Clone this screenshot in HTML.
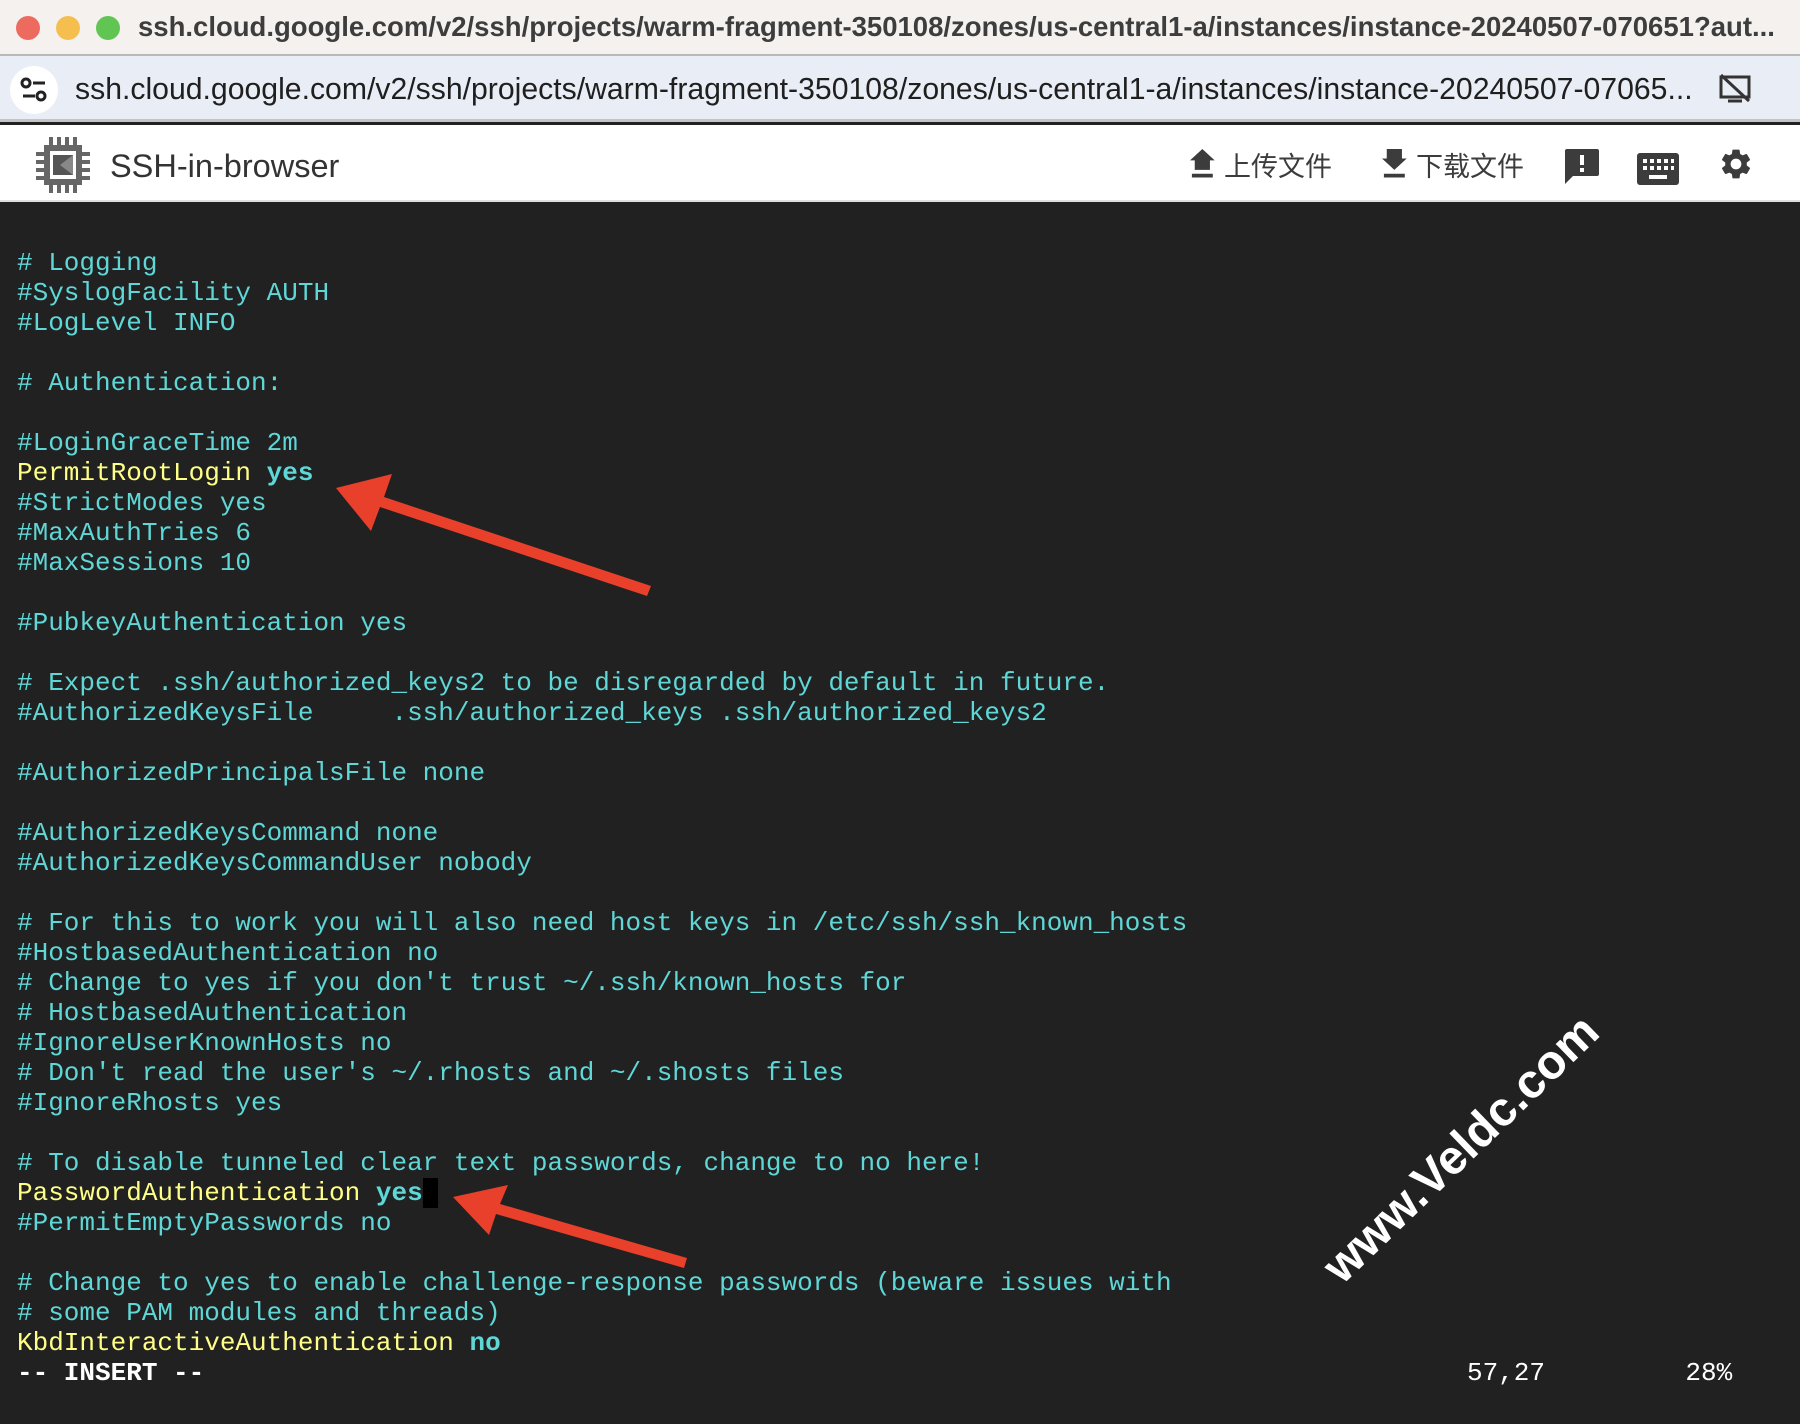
<!DOCTYPE html>
<html><head><meta charset="utf-8"><style>
*{margin:0;padding:0;box-sizing:border-box}
body{width:1800px;height:1424px;overflow:hidden;background:#212121;font-family:"Liberation Sans","Noto Sans CJK SC",sans-serif;position:relative}
#tb{position:absolute;left:0;top:0;width:1800px;height:56px;background:#f5f1ee;border-bottom:2px solid #b9b9b9}
.dot{position:absolute;top:16px;width:24px;height:24px;border-radius:50%}
#tt{position:absolute;left:138px;top:11px;font-size:27.5px;font-weight:bold;color:#3d3d3d;white-space:nowrap}
#ab{position:absolute;left:0;top:56px;width:1800px;height:66px;background:#e9edf5;border-bottom:3px solid #c4c4c4}
#url{position:absolute;left:75px;top:17px;font-size:30.2px;color:#1f1f1f;white-space:nowrap}
#hd{position:absolute;left:0;top:125px;width:1800px;height:77px;background:#fff;border-bottom:2px solid #e0e0e0}
#pre{position:absolute;left:17px;top:248px;font-family:"Liberation Mono",monospace;font-size:26px;line-height:30px;color:#5fd7d7;white-space:pre}
.y{color:#ffff87}.b{font-weight:bold}.w{color:#fff;font-weight:bold}
.cur{background:#000;color:#000}
</style></head><body>
<div id="tb">
<div class="dot" style="left:16px;background:#ed6a5e"></div>
<div class="dot" style="left:56px;background:#f5bf4f"></div>
<div class="dot" style="left:96px;background:#61c554"></div>
<div id="tt">ssh.cloud.google.com/v2/ssh/projects/warm-fragment-350108/zones/us-central1-a/instances/instance-20240507-070651?aut...</div>
</div>
<div id="ab">
<div style="position:absolute;left:10px;top:10px;width:48px;height:48px;border-radius:50%;background:#fff"></div>
<svg style="position:absolute;left:20px;top:21px" width="28" height="26" viewBox="0 0 28 26"><circle cx="6" cy="6" r="4" fill="none" stroke="#222" stroke-width="3"/><rect x="13" y="4.5" width="12" height="3" fill="#222"/><rect x="3" y="17.5" width="12" height="3" fill="#222"/><circle cx="21" cy="19" r="4" fill="none" stroke="#222" stroke-width="3"/></svg>
<div id="url">ssh.cloud.google.com/v2/ssh/projects/warm-fragment-350108/zones/us-central1-a/instances/instance-20240507-07065...</div>
<svg style="position:absolute;left:1718px;top:17px" width="34" height="30" viewBox="0 0 34 30"><rect x="3" y="4" width="28" height="20" fill="none" stroke="#333" stroke-width="3"/><line x1="3" y1="2" x2="31" y2="28" stroke="#333" stroke-width="3"/><line x1="10" y1="28" x2="24" y2="28" stroke="#333" stroke-width="3"/></svg>
</div>
<div id="hd">
<svg style="position:absolute;left:36px;top:12px" width="54" height="56" viewBox="0 0 54 56"><g fill="#666"><rect x="8" y="8" width="38" height="40"/><rect x="13" y="0" width="4" height="8"/><rect x="21" y="0" width="4" height="8"/><rect x="29" y="0" width="4" height="8"/><rect x="37" y="0" width="4" height="8"/><rect x="13" y="48" width="4" height="8"/><rect x="21" y="48" width="4" height="8"/><rect x="29" y="48" width="4" height="8"/><rect x="37" y="48" width="4" height="8"/><rect x="0" y="15" width="8" height="4"/><rect x="0" y="23" width="8" height="4"/><rect x="0" y="31" width="8" height="4"/><rect x="0" y="39" width="8" height="4"/><rect x="46" y="15" width="8" height="4"/><rect x="46" y="23" width="8" height="4"/><rect x="46" y="31" width="8" height="4"/><rect x="46" y="39" width="8" height="4"/></g><rect x="14" y="14" width="26" height="28" fill="#fff"/><rect x="17" y="18" width="20" height="20" fill="#555"/><polygon points="37,18 37,38 24,28" fill="#888"/></svg>
<div style="position:absolute;left:110px;top:23px;font-size:32.5px;color:#333">SSH-in-browser</div>
<svg style="position:absolute;left:1190px;top:24px" width="26" height="30" viewBox="0 0 26 30"><path d="M5 22V12H0L13 0L26 12H21V22Z M2 26H24V30H2Z" fill="#3c3c3c" transform="scale(0.95)"/></svg>
<div style="position:absolute;left:1224px;top:20px;font-size:27px;color:#3c3c3c">上传文件</div>
<svg style="position:absolute;left:1382px;top:24px" width="26" height="30" viewBox="0 0 26 30"><path d="M5 0V10H0L13 22L26 10H21V0Z M2 26H24V30H2Z" fill="#3c3c3c" transform="scale(0.95)"/></svg>
<div style="position:absolute;left:1416px;top:20px;font-size:27px;color:#3c3c3c">下载文件</div>
<svg style="position:absolute;left:1564px;top:24px" width="36" height="38" viewBox="0 0 36 38"><path d="M3 0H33Q35 0 35 2V25Q35 27 33 27H9L1 35V2Q1 0 3 0Z" fill="#3c3c3c"/><rect x="16" y="6" width="4" height="10" fill="#fff"/><rect x="16" y="19" width="4" height="4" fill="#fff"/></svg>
<svg style="position:absolute;left:1637px;top:28px" width="42" height="32" viewBox="0 0 42 32"><rect x="0" y="0" width="42" height="32" rx="3" fill="#3c3c3c"/><g fill="#fff"><rect x="6" y="6" width="4" height="4"/><rect x="13" y="6" width="4" height="4"/><rect x="20" y="6" width="4" height="4"/><rect x="27" y="6" width="4" height="4"/><rect x="34" y="6" width="3" height="4"/><rect x="6" y="13" width="4" height="4"/><rect x="13" y="13" width="4" height="4"/><rect x="20" y="13" width="4" height="4"/><rect x="27" y="13" width="4" height="4"/><rect x="34" y="13" width="3" height="4"/><rect x="12" y="22" width="18" height="4"/></g></svg>
<svg style="position:absolute;left:1718px;top:21px" width="36" height="36" viewBox="0 0 24 24"><path fill="#3c3c3c" d="M19.14 12.94c.04-.3.06-.61.06-.94 0-.32-.02-.64-.07-.94l2.030-1.58a.49.49 0 0 0 .12-.61l-1.92-3.32a.49.49 0 0 0-.59-.22l-2.39.96c-.5-.38-1.03-.7-1.62-.94l-.36-2.54a.48.48 0 0 0-.48-.41h-3.840c-.24 0-.43.17-.47.41l-.36 2.54c-.59.24-1.13.57-1.62.94l-2.39-.96a.48.48 0 0 0-.59.22L2.74 8.87c-.12.21-.08.47.12.61l2.03 1.58c-.05.3-.09.63-.09.94s.02.64.07.94l-2.03 1.58a.49.49 0 0 0-.12.61l1.92 3.32c.12.22.37.29.59.22l2.39-.96c.5.38 1.03.7 1.62.94l.36 2.54c.05.24.24.41.48.41h3.84c.24 0 .44-.17.47-.41l.36-2.54c.59-.24 1.13-.56 1.62-.94l2.39.96c.22.08.47 0 .59-.22l1.92-3.32c.12-.22.07-.47-.12-.61l-2.01-1.58zM12 15.6c-1.98 0-3.6-1.620-3.6-3.6s1.62-3.6 3.6-3.6 3.6 1.62 3.6 3.6-1.62 3.6-3.6 3.6z"/></svg>
</div>
<div id="pre"># Logging
#SyslogFacility AUTH
#LogLevel INFO

# Authentication:

#LoginGraceTime 2m
<span class="y">PermitRootLogin</span> <span class="b">yes</span>
#StrictModes yes
#MaxAuthTries 6
#MaxSessions 10

#PubkeyAuthentication yes

# Expect .ssh/authorized_keys2 to be disregarded by default in future.
#AuthorizedKeysFile     .ssh/authorized_keys .ssh/authorized_keys2

#AuthorizedPrincipalsFile none

#AuthorizedKeysCommand none
#AuthorizedKeysCommandUser nobody

# For this to work you will also need host keys in /etc/ssh/ssh_known_hosts
#HostbasedAuthentication no
# Change to yes if you don't trust ~/.ssh/known_hosts for
# HostbasedAuthentication
#IgnoreUserKnownHosts no
# Don't read the user's ~/.rhosts and ~/.shosts files
#IgnoreRhosts yes

# To disable tunneled clear text passwords, change to no here!
<span class="y">PasswordAuthentication</span> <span class="b">yes</span><span class="cur">_</span>
#PermitEmptyPasswords no

# Change to yes to enable challenge-response passwords (beware issues with
# some PAM modules and threads)
<span class="y">KbdInteractiveAuthentication</span> <span class="b">no</span>
<span class="w">-- INSERT --</span></div>
<div style="position:absolute;left:1467px;top:1358px;font-family:'Liberation Mono',monospace;font-size:26px;color:#fff;white-space:pre">57,27         28%</div>
<svg style="position:absolute;left:0;top:0" width="1800" height="1424">
<polygon points="336,488 392,474 384,497 651,586 647,596 380,507 371,531" fill="#e8402a"/>
<polygon points="453,1197 508,1185 500,1204 687,1258 684,1268 496,1214 489,1235" fill="#e8402a"/>
<text x="1460" y="1165" transform="rotate(-44 1460 1148)" text-anchor="middle" font-family="Liberation Sans" font-weight="bold" font-size="48" fill="#fff" stroke="#222" stroke-width="2" paint-order="stroke">www.Veldc.com</text>
</svg>
</body></html>
